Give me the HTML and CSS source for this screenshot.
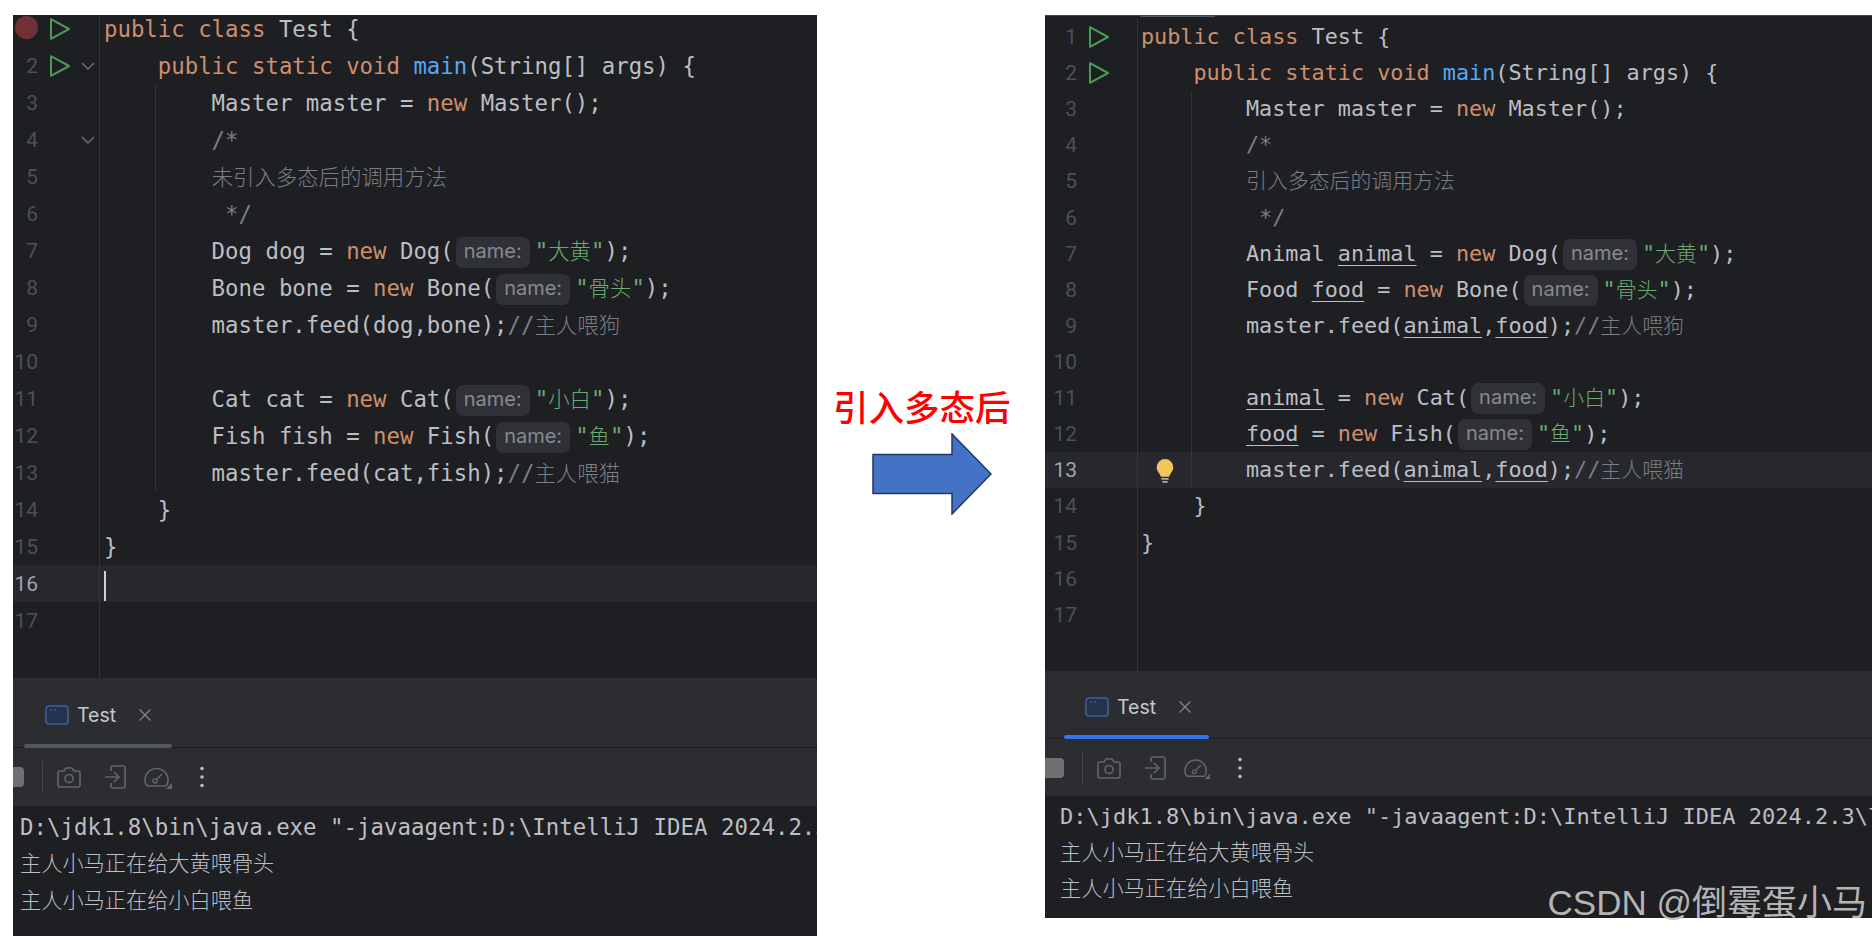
FILE: index.html
```html
<!DOCTYPE html>
<html lang="zh-CN">
<head>
<meta charset="utf-8">
<title>引入多态后</title>
<link rel="stylesheet" href="styles.css">
</head>
<body>
<svg class="defs" width="0" height="0" aria-hidden="true">
  <defs>
    <symbol id="run" viewBox="0 0 20 22"><path d="M1 1.2 L19 11 L1 20.8 Z" fill="none" stroke="#499c54" stroke-width="2" stroke-linejoin="round"/></symbol>
    <symbol id="fold" viewBox="0 0 14 10"><path d="M1 2 L7 8 L13 2" fill="none" stroke="#6f737a" stroke-width="1.4"/></symbol>
    <symbol id="term" viewBox="0 0 24 20"><rect x="1" y="1" width="22" height="18" rx="3" fill="#25324d" stroke="#3d6098" stroke-width="1.6"/><path d="M5 5h2M9 5h2" stroke="#4a6ea8" stroke-width="1.2"/></symbol>
    <symbol id="close" viewBox="0 0 14 14"><path d="M1.5 1.5 L12.5 12.5 M12.5 1.5 L1.5 12.5" stroke="#7f8288" stroke-width="1.4"/></symbol>
    <symbol id="cam" viewBox="0 0 24 22"><path d="M3 5 H7 L9 2 H15 L17 5 H21 Q23 5 23 7 V19 Q23 21 21 21 H3 Q1 21 1 19 V7 Q1 5 3 5 Z" fill="none" stroke="#62656b" stroke-width="1.6"/><circle cx="12" cy="12.5" r="4" fill="none" stroke="#62656b" stroke-width="1.6"/></symbol>
    <symbol id="login" viewBox="0 0 21 24"><path d="M6 6 V3 Q6 1 8 1 H18 Q20 1 20 3 V21 Q20 23 18 23 H8 Q6 23 6 21 V18" fill="none" stroke="#62656b" stroke-width="1.6"/><path d="M0 12 H14 M9 7 L14 12 L9 17" fill="none" stroke="#62656b" stroke-width="1.6"/></symbol>
    <symbol id="gauge" viewBox="0 0 28 24"><path d="M5 21 Q1 21 1 15 A11.5 11.5 0 0 1 24 15 Q24 19 22 21 Z" fill="none" stroke="#62656b" stroke-width="1.6"/><circle cx="11" cy="16" r="2" fill="none" stroke="#62656b" stroke-width="1.4"/><path d="M13 14 L18 9" stroke="#62656b" stroke-width="1.5"/><path d="M28 18 V24 H22 Z" fill="#62656b"/></symbol>
    <symbol id="dots" viewBox="0 0 4 22"><circle cx="2" cy="2.5" r="1.8" fill="#bcbec4"/><circle cx="2" cy="11" r="1.8" fill="#bcbec4"/><circle cx="2" cy="19.5" r="1.8" fill="#bcbec4"/></symbol>
    <symbol id="bulb" viewBox="0 0 18 25"><path d="M9 1 A8 8 0 0 1 17 9 C17 13 14 14.5 13 18 H5 C4 14.5 1 13 1 9 A8 8 0 0 1 9 1 Z" fill="#f2c55c"/><path d="M5.5 20 H12.5 M6.5 23 H11.5" stroke="#a8adb5" stroke-width="1.6"/></symbol>
  </defs>
</svg>

<main class="page">
  <section class="panel left">
    <div class="editor">
      <div class="lines">
        <div class="line"><div class="gutter"><span class="num">&nbsp;</span><svg class="run"><use href="#run"/></svg></div><div class="code"><b>public class </b>Test {</div><span class="breakpoint"></span></div>
        <div class="line"><div class="gutter"><span class="num">2</span><svg class="run"><use href="#run"/></svg><svg class="fold"><use href="#fold"/></svg></div><div class="code">    <b>public static void </b><i>main</i>(String[] args) {</div></div>
        <div class="line g"><div class="gutter"><span class="num">3</span></div><div class="code">        Master master = <b>new </b>Master();</div></div>
        <div class="line g"><div class="gutter"><span class="num">4</span><span class="slot"></span><svg class="fold"><use href="#fold"/></svg></div><div class="code"><em>        /*</em></div></div>
        <div class="line g"><div class="gutter"><span class="num">5</span></div><div class="code"><em>        <span class="zh">未引入多态后的调用方法</span></em></div></div>
        <div class="line g"><div class="gutter"><span class="num">6</span></div><div class="code"><em>         */</em></div></div>
        <div class="line g"><div class="gutter"><span class="num">7</span></div><div class="code">        Dog dog = <b>new </b>Dog(<span class="hint">name:</span><s>"<span class="zh">大黄</span>"</s>);</div></div>
        <div class="line g"><div class="gutter"><span class="num">8</span></div><div class="code">        Bone bone = <b>new </b>Bone(<span class="hint">name:</span><s>"<span class="zh">骨头</span>"</s>);</div></div>
        <div class="line g"><div class="gutter"><span class="num">9</span></div><div class="code">        master.feed(dog,bone);<em>//<span class="zh">主人喂狗</span></em></div></div>
        <div class="line g"><div class="gutter"><span class="num">10</span></div><div class="code"> </div></div>
        <div class="line g"><div class="gutter"><span class="num">11</span></div><div class="code">        Cat cat = <b>new </b>Cat(<span class="hint">name:</span><s>"<span class="zh">小白</span>"</s>);</div></div>
        <div class="line g"><div class="gutter"><span class="num">12</span></div><div class="code">        Fish fish = <b>new </b>Fish(<span class="hint">name:</span><s>"<span class="zh">鱼</span>"</s>);</div></div>
        <div class="line g"><div class="gutter"><span class="num">13</span></div><div class="code">        master.feed(cat,fish);<em>//<span class="zh">主人喂猫</span></em></div></div>
        <div class="line"><div class="gutter"><span class="num">14</span></div><div class="code">    }</div></div>
        <div class="line"><div class="gutter"><span class="num">15</span></div><div class="code">}</div></div>
        <div class="line active"><div class="gutter"><span class="num">16</span></div><div class="code"><span class="caret"></span></div></div>
        <div class="line"><div class="gutter"><span class="num">17</span></div><div class="code"> </div></div>
      </div>
      <div class="filler"></div>
    </div>
    <div class="tabs">
      <div class="tab">
        <div class="tab-row"><svg class="ic-term"><use href="#term"/></svg><span class="tab-name">Test</span><svg class="ic-close"><use href="#close"/></svg></div>
        <div class="tab-bar"></div>
      </div>
    </div>
    <div class="toolbar">
      <span class="stop"></span><span class="sep"></span>
      <svg class="ic-cam"><use href="#cam"/></svg><svg class="ic-login"><use href="#login"/></svg><svg class="ic-gauge"><use href="#gauge"/></svg><svg class="ic-dots"><use href="#dots"/></svg>
    </div>
    <div class="console">
      <div class="out">D:\jdk1.8\bin\java.exe "-javaagent:D:\IntelliJ IDEA 2024.2.3\lib\idea_rt.jar=51234:D:\IntelliJ</div>
      <div class="out zh">主人小马正在给大黄喂骨头</div>
      <div class="out zh">主人小马正在给小白喂鱼</div>
    </div>
  </section>

  <section class="middle">
    <h1 class="title">引入多态后</h1>
    <svg class="arrow" width="120" height="82" viewBox="0 0 120 82"><path d="M1 21.5 H80 V1 L119 41 L80 81 V60.5 H1 Z" fill="#4472c4" stroke="#1f3864" stroke-width="1.5"/></svg>
  </section>

  <section class="panel right">
    <div class="editor">
      <span class="top-tab"></span>
      <div class="lines">
        <div class="line"><div class="gutter"><span class="num">1</span><svg class="run"><use href="#run"/></svg></div><div class="code"><b>public class </b>Test {</div></div>
        <div class="line"><div class="gutter"><span class="num">2</span><svg class="run"><use href="#run"/></svg></div><div class="code">    <b>public static void </b><i>main</i>(String[] args) {</div></div>
        <div class="line g"><div class="gutter"><span class="num">3</span></div><div class="code">        Master master = <b>new </b>Master();</div></div>
        <div class="line g"><div class="gutter"><span class="num">4</span></div><div class="code"><em>        /*</em></div></div>
        <div class="line g"><div class="gutter"><span class="num">5</span></div><div class="code"><em>        <span class="zh">引入多态后的调用方法</span></em></div></div>
        <div class="line g"><div class="gutter"><span class="num">6</span></div><div class="code"><em>         */</em></div></div>
        <div class="line g"><div class="gutter"><span class="num">7</span></div><div class="code">        Animal <u>animal</u> = <b>new </b>Dog(<span class="hint">name:</span><s>"<span class="zh">大黄</span>"</s>);</div></div>
        <div class="line g"><div class="gutter"><span class="num">8</span></div><div class="code">        Food <u>food</u> = <b>new </b>Bone(<span class="hint">name:</span><s>"<span class="zh">骨头</span>"</s>);</div></div>
        <div class="line g"><div class="gutter"><span class="num">9</span></div><div class="code">        master.feed(<u>animal</u>,<u>food</u>);<em>//<span class="zh">主人喂狗</span></em></div></div>
        <div class="line g"><div class="gutter"><span class="num">10</span></div><div class="code"> </div></div>
        <div class="line g"><div class="gutter"><span class="num">11</span></div><div class="code">        <u>animal</u> = <b>new </b>Cat(<span class="hint">name:</span><s>"<span class="zh">小白</span>"</s>);</div></div>
        <div class="line g"><div class="gutter"><span class="num">12</span></div><div class="code">        <u>food</u> = <b>new </b>Fish(<span class="hint">name:</span><s>"<span class="zh">鱼</span>"</s>);</div></div>
        <div class="line g active"><div class="gutter"><span class="num">13</span></div><div class="code">        master.feed(<u>animal</u>,<u>food</u>);<em>//<span class="zh">主人喂猫</span></em></div><svg class="bulb"><use href="#bulb"/></svg></div>
        <div class="line"><div class="gutter"><span class="num">14</span></div><div class="code">    }</div></div>
        <div class="line"><div class="gutter"><span class="num">15</span></div><div class="code">}</div></div>
        <div class="line"><div class="gutter"><span class="num">16</span></div><div class="code"> </div></div>
        <div class="line"><div class="gutter"><span class="num">17</span></div><div class="code"> </div></div>
      </div>
      <div class="filler"></div>
    </div>
    <div class="tabs">
      <div class="tab">
        <div class="tab-row"><svg class="ic-term"><use href="#term"/></svg><span class="tab-name">Test</span><svg class="ic-close"><use href="#close"/></svg></div>
        <div class="tab-bar"></div>
      </div>
    </div>
    <div class="toolbar">
      <span class="stop"></span><span class="sep"></span>
      <svg class="ic-cam"><use href="#cam"/></svg><svg class="ic-login"><use href="#login"/></svg><svg class="ic-gauge"><use href="#gauge"/></svg><svg class="ic-dots"><use href="#dots"/></svg>
    </div>
    <div class="console">
      <div class="out">D:\jdk1.8\bin\java.exe "-javaagent:D:\IntelliJ IDEA 2024.2.3\lib\idea_rt.jar=51234:D:\IntelliJ</div>
      <div class="out zh">主人小马正在给大黄喂骨头</div>
      <div class="out zh">主人小马正在给小白喂鱼</div>
      <div class="out"><span class="console-caret"></span></div>
    </div>
    <div class="watermark">CSDN @倒霉蛋小马</div>
  </section>
</main>
</body>
</html>
```

FILE: styles.css
```css
* { box-sizing: border-box; }
html, body { margin: 0; height: 936px; overflow: hidden; background: #fff; }
.defs { position: absolute; }

.page { display: flex; height: 936px; padding-top: 15px; padding-left: 13px; }

.panel {
  position: relative;
  display: flex;
  flex-direction: column;
  background: #1e1f22;
  color: #bcbec4;
  font-family: "DejaVu Sans Mono", "Noto Sans CJK SC", monospace;
}
.left {
  flex: none;
  width: 804px; height: 921px;
  overflow: hidden;
  --fs: 22.35px; --row: 37px; --zh: 21.4px; --texty: 1px; --codex: 4px;
  --gw: 87px; --numw: 25px; --lead: -5px;
  --guide: 142px; --editor: 663px; --tabs: 70px; --tool: 58px;
  --stop: 11px; --tabx: 11px; --tabw: 148px; --conx: 7px; --cony: 3px; --conrow: 37px; --confs: 22.4px; --gauge: 28px; --barc: #55585e;
}
.right {
  flex: 1; min-width: 0; height: 903px;
  --fs: 21.8px; --row: 36.12px; --zh: 20.9px; --texty: 0px; --codex: 3px;
  --gw: 93px; --numw: 32px; --lead: 3px;
  --guide: 146px; --editor: 656px; --tabs: 68px; --tool: 57px;
  --stop: 19px; --tabx: 19px; --tabw: 145px; --conx: 15px; --cony: 3px; --conrow: 36.2px; --confs: 22px; --gauge: 26px; --barc: #3574f0;
}
.right .editor { border-top: 1px solid #45474c; }

.editor {
  position: relative;
  display: flex;
  flex-direction: column;
  height: var(--editor);
  flex: none;
  overflow: hidden;
}
.top-tab { position: absolute; left: 95px; top: -1px; width: 75px; height: 2px; background: #55585e; }
.lines { margin-top: var(--lead); }

.line {
  position: relative;
  display: flex;
  height: var(--row);
  line-height: var(--row);
  font-size: var(--fs);
  white-space: pre;
}
.line.active { background: #26282e; }
.line.active .num { color: #a1a3ab; }
.line.g::after {
  content: "";
  position: absolute;
  top: 0; bottom: 0;
  left: var(--guide);
  width: 1px;
  background: #313438;
}

.gutter {
  display: flex;
  align-items: center;
  flex: none;
  width: var(--gw);
  border-right: 1px solid #313438;
}
.num {
  flex: none;
  width: var(--numw);
  padding-top: var(--texty);
  text-align: right;
  font-family: Roboto, "Noto Sans", sans-serif;
  font-size: 21px;
  color: #4b5059;
}
.run { flex: none; width: 20px; height: 22px; margin-left: 11.5px; }
.slot { flex: none; width: 20px; margin-left: 11.5px; }
.fold { flex: none; width: 14px; height: 10px; margin-left: 11px; }
.code { padding: var(--texty) 0 0 var(--codex); flex: 1; min-width: 0; }

.code b { font-weight: 400; color: #cf8e6d; }
.code i { font-style: normal; color: #56a8f5; }
.code em { font-style: normal; color: #7a7e85; }
.code s { text-decoration: none; color: #6aab73; }
.code u { text-decoration: underline; text-decoration-thickness: 1px; text-underline-offset: 4px; }
.zh {
  font-family: "Noto Sans CJK SC", sans-serif;
  font-size: var(--zh);
  font-weight: 300;
}
.code .zh { line-height: 0; }

.hint {
  display: inline-block;
  height: 31px;
  line-height: 29px;
  margin: 0 5px 0 2px;
  padding: 0 8px;
  vertical-align: 1px;
  border-radius: 7px;
  background: #2f3136;
  color: #878a91;
  font-family: Inter, "Liberation Sans", sans-serif;
  font-size: 20px;
}

.caret {
  display: inline-block;
  width: 2px;
  height: 30px;
  vertical-align: middle;
  background: #ced0d6;
}
.breakpoint {
  position: absolute;
  left: 2px; top: 6px;
  width: 23px; height: 23px;
  border-radius: 50%;
  background: #6f3133;
}
.bulb {
  position: absolute;
  left: 110px; top: 6px;
  width: 20px; height: 26px;
}
.filler {
  flex: 1;
  width: var(--gw);
  border-right: 1px solid #313438;
}

.tabs {
  flex: none;
  height: var(--tabs);
  padding-left: var(--tabx);
  background: #2b2d30;
  border-bottom: 1px solid #1e1f22;
}
.tab {
  display: flex;
  flex-direction: column;
  width: var(--tabw);
  height: var(--tabs);
}
.tab-row {
  flex: 1;
  display: flex;
  align-items: center;
  padding: 7px 0 0 21px;
}
.tab-bar { flex: none; height: 4px; border-radius: 2px; background: var(--barc); }
.ic-term { width: 24px; height: 20px; flex: none; }
.tab-name {
  margin-left: 8px;
  font-family: Inter, "Noto Sans", sans-serif;
  font-size: 19.5px;
  color: #c6c8ce;
}
.ic-close { width: 14px; height: 14px; flex: none; margin-left: 22px; }

.toolbar {
  flex: none;
  display: flex;
  align-items: center;
  height: var(--tool);
  background: #2b2d30;
}
.stop { flex: none; width: var(--stop); height: 20px; border-radius: 0 4px 4px 0; background: #6f7072; }
.sep { flex: none; width: 1px; height: 32px; margin-left: 18px; background: #43454a; }
.ic-cam { flex: none; width: 24px; height: 22px; margin-left: 14px; }
.ic-login { flex: none; width: 21px; height: 24px; margin-left: 24px; }
.ic-gauge { flex: none; width: var(--gauge); height: 24px; margin-left: 18px; }
.ic-dots { flex: none; width: 4px; height: 22px; margin-left: 28px; }

.console {
  flex: 1;
  min-height: 0;
  overflow: hidden;
  padding: var(--cony) 0 0 var(--conx);
  background: #1e1f22;
}
.out {
  height: var(--conrow);
  line-height: var(--conrow);
  font-size: var(--confs);
  white-space: pre;
}
.out.zh { font-size: 21.2px; line-height: calc(var(--conrow) - 5px); }
.console-caret { display: inline-block; width: 1px; height: 14px; margin-left: 1px; vertical-align: top; margin-top: 12px; background: #bcbec4; }

.middle { flex: none; width: 228px; padding-left: 16px; }
.title {
  margin: 370px 0 0;
  height: 42px;
  line-height: 42px;
  font-family: "Noto Sans CJK SC", sans-serif;
  font-size: 35.5px;
  font-weight: 500;
  color: #f00;
}
.arrow { display: block; margin: 6px 0 0 39px; }

.watermark {
  position: absolute;
  right: 5px; bottom: -3px;
  font-family: "Liberation Sans", "Noto Sans CJK SC", sans-serif;
  font-size: 35px;
  line-height: 36px;
  white-space: nowrap;
  color: rgba(190, 190, 190, 0.95);
}
```
